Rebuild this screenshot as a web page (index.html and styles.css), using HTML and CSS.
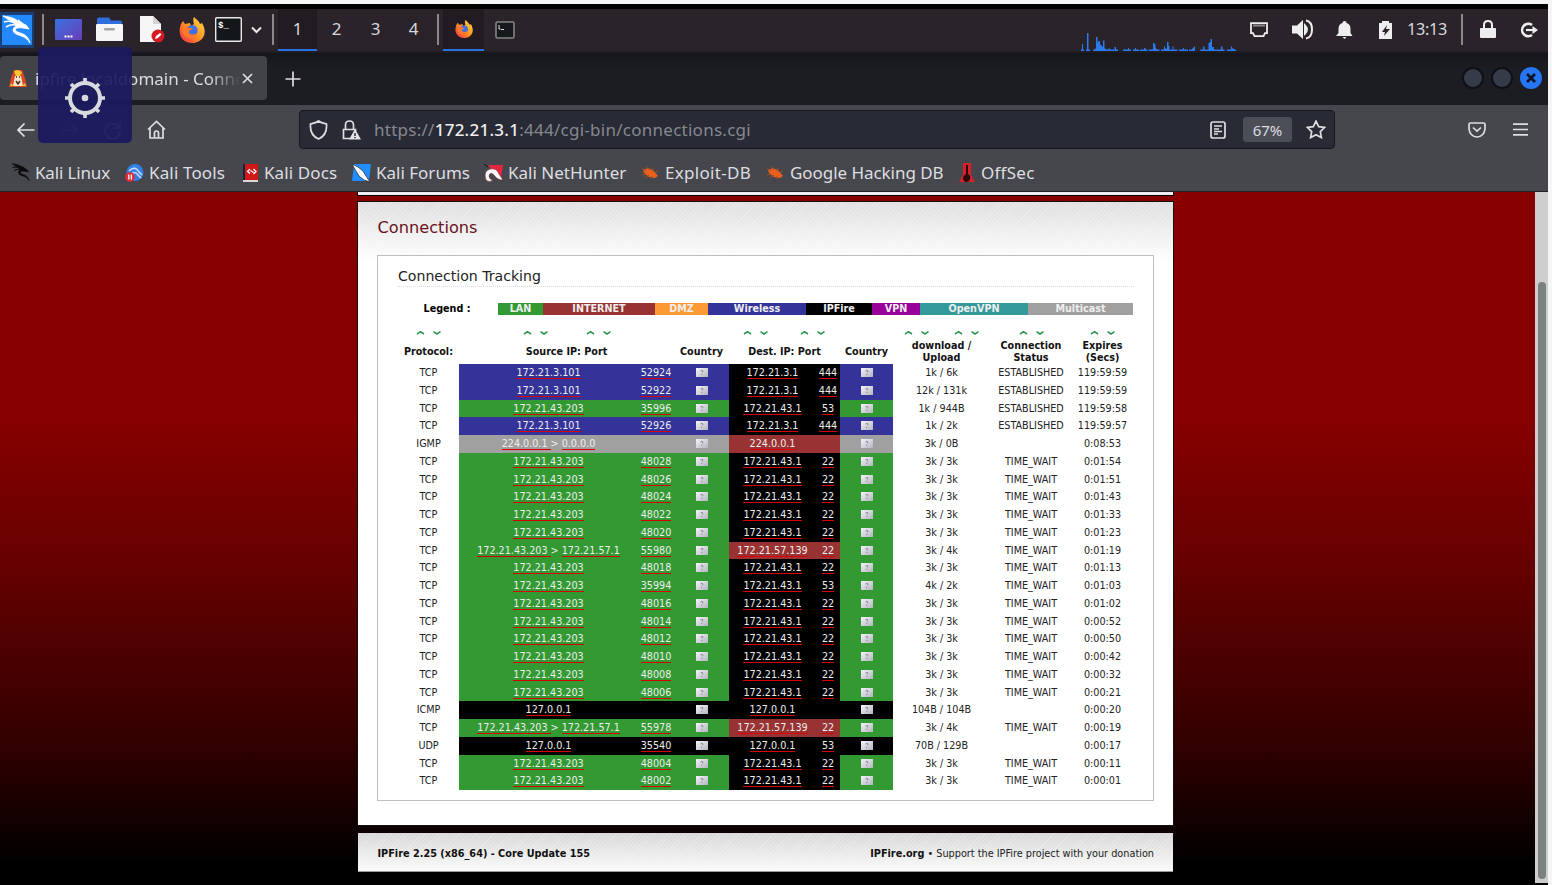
FILE: index.html
```html
<!DOCTYPE html>
<html lang="en">
<head>
<meta charset="utf-8">
<title>ipfire.localdomain - Connections</title>
<link rel="stylesheet" href="styles.css">
</head>
<body>
<svg class="defs" width="0" height="0">
  <defs>
    <linearGradient id="gBlue" x1="0" y1="0" x2="1" y2="1"><stop offset="0" stop-color="#3a70e0"/><stop offset="1" stop-color="#6a3fb8"/></linearGradient>
    <linearGradient id="gFox" x1="1" y1="0" x2="0" y2="1"><stop offset="0" stop-color="#ffe14a"/><stop offset=".5" stop-color="#ff9422"/><stop offset="1" stop-color="#f5264e"/></linearGradient>
    <linearGradient id="gFlag" x1="0" y1="0" x2="1" y2="1"><stop offset="0" stop-color="#f4f4fa"/><stop offset="1" stop-color="#b4b4c0"/></linearGradient>
    <symbol id="dragon" viewBox="0 0 30 30">
      <path d="M1 1 C8 2 13 3 17 7 L24 10 L27 14 L21 13 C15 12 12 14 14 16 C17 19 25 17 28 28 C24 21 18 21 14 19 C10 17 10 12 15 11 C11 6 6 5 1 1Z" fill="currentColor" stroke="currentColor" stroke-width=".9"/>
      <path d="M2 7 C8 5 12 7 15 10 M4 12 C9 9 12 9 15 11 M16 5 L21 9" fill="none" stroke="currentColor" stroke-width="1.6"/>
    </symbol>
    <symbol id="firefox" viewBox="0 0 26 26">
      <path d="M15 0 C18 3 20 4 21 7 L23 6 C30 18 22 26 13 26 C3 26 -2 17 2 7 L4 4 L6 7 L11 6 L12 9 L15 7 C14 4 14 2 15 0Z" fill="url(#gFox)"/>
      <circle cx="13" cy="13.500" r="5.600" fill="#3d6fe8"/>
      <path d="M3 11 C7 8 9 12 14 11 C12 14 9 13 10 16 C12 18 15 18 18 16 C17 22 7 23 4 16Z" fill="#ff7a28"/>
    </symbol>
    <symbol id="bug" viewBox="0 0 18 16">
      <path d="M2 5 L7 3 L13 6 L17 11 L14 13 L8 12 L3 8Z" fill="#e8601c"/>
      <path d="M1 3 L5 6 M5 1 L8 5 M11 3 L13 7 M15 6 L17 7 M1 10 L5 9 M4 13 L8 10 M10 14 L11 11" stroke="#a54b22" stroke-width="1"/>
    </symbol>
  </defs>
</svg>

<div class="desktop">
  <header class="panel">
    <div class="slot w36"><svg class="kali" width="34" height="36" viewBox="0 0 34 36"><rect width="34" height="36" fill="#164a94" opacity=".7"/><rect x="2" y="3" width="30" height="30" fill="#2389ff"/><use href="#dragon" x="2" y="3" width="30" height="30" color="#fff"/></svg></div>
    <div class="slot w13"><i class="sep"></i></div>
    <div class="slot w39"><svg width="27" height="21"><rect width="27" height="21" rx="1" fill="url(#gBlue)"/><path d="M9.500 17.500h8" stroke="#fff" stroke-width="1.800" stroke-dasharray="2 1"/></svg></div>
    <div class="slot w43"><svg width="27" height="25"><path d="M1 9V2q0-1.500 2-1.500h10l2 3h9q2 0 2 2V9z" fill="#2f6fdc"/><rect y="7" width="27" height="17" rx="1" fill="#f6f6f6"/><rect x="8" y="11" width="11" height="2.600" rx="1.300" fill="#a5a5a5"/></svg></div>
    <div class="slot w42"><svg width="26" height="27"><path d="M1 0h13l8 8v18H1z" fill="#f5f5f5"/><path d="M14 0v8h8z" fill="#d5d5d5"/><circle cx="19" cy="20" r="6.500" fill="#d31922"/><path d="M16 23l1-3 4-3 1.500 1.500-3.500 3.500z" fill="#fff"/></svg></div>
    <div class="slot w38"><svg width="26" height="26"><use href="#firefox"/></svg></div>
    <div class="slot w35"><svg width="27" height="25"><rect x=".7" y=".7" width="25.600" height="23.600" rx="1" fill="#14171a" stroke="#e9e9e9" stroke-width="1.400"/><text x="3" y="11" class="term">$_</text></svg></div>
    <div class="slot w21"><svg width="11" height="8"><path d="M1 1.500l4.500 4.500L10 1.500" class="ln2"/></svg></div>
    <div class="slot w11"><i class="sep"></i></div>
    <div class="slot ws on">1</div><div class="slot ws">2</div><div class="slot ws">3</div><div class="slot ws w37">4</div>
    <div class="slot w11"><i class="sep"></i></div>
    <div class="slot w41 on"><svg width="18" height="18" viewBox="0 0 26 26"><use href="#firefox"/></svg></div>
    <div class="slot w41"><svg width="20" height="18"><rect x="1" y="1" width="18" height="16" rx="1.500" fill="#15191b" stroke="#858585" stroke-width="1.600"/><path d="M4 4v4h1.500M6 8.500h3" stroke="#ddd" fill="none"/></svg></div>
    <svg class="cpu" width="156" height="18"><path fill="#2a7bf0" d="M0 18v-1.500h1V11h1v5.500h1V18zM5 18v-1.500h1V0h1.500v16.500H9V18zM12 18v-1.500h2l1-2V4h1.500v6l1-2h1.500v3l1 1 1 1 1 1V7.500h1.500V15l2 1.500h2V15h1v1.500h5V14h1.500v2.500h2V18zM42 16.500h5V15h1v1.500h2V18h-8zM52 16.500h2V15h1v1.500h3V18h-6zM59 16.500h4V15h1.500v1.500h2V18h-8zM68 16.500h4V10h1.500v1l1 1v3l2 1.500h2V18h-11zM80 18v-1.500h3v-3h1v2h2V9h1.500v4h1v3.500h3v-3h1v3h4V18zM98 16.500h4V15h1v1.500h4V18h-9zM108 16.500h3l1-2h1v-1h1V18h-6zM119 16.500h3v-3h1.500v3h4V10h1V9h1V6h1.500v8h2v2.500h7v-3h1.500v3h2V18h-24zM146 16.500h4v-3h1v2h2v1h2V18h-9z"/></svg>
    <div class="slot w44"><svg width="18" height="16"><path d="M1 1.200h16v10h-2l-1.500 3h-9L3 11.200H1z" fill="none" stroke="#eee" stroke-width="1.800"/><path d="M3.500 3.500h11" stroke="#eee" stroke-width="2" stroke-dasharray="1 1"/></svg></div>
    <div class="slot w44"><svg width="22" height="21"><path d="M0 6.500h5L11 1v19l-6-5.500H0z" fill="#eee"/><path d="M13 6.500q4 4 0 8zM14 1.500q6 1 6 9t-6 9" fill="none" stroke="#eee" stroke-width="2"/></svg></div>
    <div class="slot w39"><svg width="17" height="18"><path d="M8.500 0q2 0 2 2 4 1 4 6v4l2 3H0l2.500-3V8q0-5 4-6 0-2 2-2zM6.500 16h4l-2 2z" fill="#eee"/></svg></div>
    <div class="slot w43"><svg width="13" height="18"><path d="M0 2h3V0h7v2h3v16H0z" fill="#eee"/><path d="M8 4L3 11h3l-1 4 6-7H7z" fill="#2b232a"/></svg></div>
    <div class="slot w40 clock">13:13</div>
    <div class="slot w30"><i class="sep"></i></div>
    <div class="slot w21"><svg width="16" height="19"><path d="M4 9V5q0-4 4-4t4 4v4" fill="none" stroke="#eee" stroke-width="2"/><rect y="8" width="16" height="10" rx="1" fill="#eee"/></svg></div>
    <div class="slot w38 out"><svg width="18" height="16"><path d="M12 3A6.200 6.200 0 1 0 12 13" fill="none" stroke="#eee" stroke-width="2.600"/><path d="M6 8h7" stroke="#eee" stroke-width="2.200"/><path d="M12.500 4l5.500 4-5.500 4z" fill="#eee"/></svg></div>
  </header>

  <div class="tabs">
    <div class="tab">
      <svg class="fav" width="18" height="19"><path d="M5 1h8l3 8 2 9H0l2-9z" fill="#dc4a24"/><path d="M5 2l4-1 4 2-2 4H7z" fill="#ffc72f"/><path d="M6 7h6l2 10H4z" fill="#f6e7cc"/><path d="M7 8h1M10 8h1M7 12l2 3 2-3" stroke="#4b2415" stroke-width="1.500" fill="none"/><path d="M2 14l3 3H1zM16 14l-3 3h4z" fill="#ffb72b"/></svg>
      <span class="tabname">ipfire.localdomain - Conne</span>
      <svg width="11" height="11"><path d="M1 1l9 9M10 1l-9 9" class="ln"/></svg>
    </div>
    <svg class="plus" width="16" height="16"><path d="M8 .5v15M.5 8h15" class="ln"/></svg>
    <div class="wins"><i class="win"></i><i class="win"></i><i class="win close"><svg width="10" height="10"><path d="M1 1l8 8M9 1L1 9" stroke="#0b1224" stroke-width="2.600"/></svg></i></div>
  </div>

  <div class="toolbar">
    <svg class="back" width="18" height="14"><path d="M17.500 7H1M7.500 .5L1 7l6.500 6.500" class="ln"/></svg>
    <svg class="fwd" width="18" height="14"><path d="M.5 7H17M10.500 .5L17 7l-6.500 6.500" class="ln"/></svg>
    <svg class="reload" width="19" height="19"><path d="M16 6.500A7.500 7.500 0 1 0 17 10M17 1v6h-6" class="ln"/></svg>
    <svg class="home" width="19" height="20"><path d="M1 9.500L9.500 1.500 18 9.500M3 8v10h13V8M7.500 18v-5q0-2 2-2t2 2v5" class="ln"/></svg>
    <div class="url">
      <svg width="19" height="20"><path d="M9.500 1C7 3 4 3.500 1.500 4q-1 11 8 15 9-4 8-15C15 3.500 12 3 9.500 1z" class="ln"/></svg>
      <svg class="lock" width="19" height="20"><path d="M8 18.500H1.500V9.500h12v2M3.500 9.500V5q0-4 4-4t4 4v4.500" class="ln"/><path d="M13 9l6 10.500H7z" fill="#e4e4e6"/><path d="M13 13v3M13 17v1.200" stroke="#282a35" stroke-width="1.500"/></svg>
      <span class="address">https://<b>172.21.3.1</b>:444/cgi-bin/connections.cgi</span>
      <svg class="reader" width="16" height="18"><rect x="1" y="1" width="14" height="16" rx="2" class="ln"/><path d="M4 5h8M4 8h5M4 10.500h8M4 13h4" stroke="#dedee0" stroke-width="1.300"/></svg>
      <span class="zoom">67%</span>
      <svg class="star" width="20" height="19"><path d="M10 1.200l2.700 5.400 6 .8-4.400 4.200 1.100 6L10 14.700l-5.400 2.900 1.100-6L1.300 7.400l6-.8z" class="ln"/></svg>
    </div>
    <svg class="pocket" width="18" height="16"><path d="M2.500 1h13q1.500 0 1.500 1.500V7q-1 7.500-8 8Q2 14.500 1 7V2.500Q1 1 2.500 1zM5 5.500l4 3.700 4-3.700" class="ln"/></svg>
    <svg class="menu" width="15" height="13"><path d="M0 1.200h15M0 6.500h15M0 11.800h15" class="ln"/></svg>
  </div>

  <nav class="marks">
    <a class="mark m1"><svg width="20" height="19" viewBox="0 0 30 30"><use href="#dragon" color="#0b0b0c"/></svg><span>Kali Linux</span></a>
    <a class="mark m2"><svg width="20" height="19"><circle cx="10" cy="9.500" r="8.500" fill="#357fe8"/><path d="M4 8q6-6 10 1l3 3M5 12q5-5 8 0l3 3" stroke="#c6e0ff" fill="none" stroke-width="1.500"/><circle cx="5" cy="14" r="4.800" fill="#e52939"/><path d="M3.800 11.500v5M6.400 11.500v5" stroke="#fff" stroke-width="1.300"/></svg><span>Kali Tools</span></a>
    <a class="mark m3"><svg width="17" height="20"><path d="M0 1h3v16H0z" fill="#13223e"/><path d="M2 1h13v16H2z" fill="#d01818"/><path d="M0 18h15" stroke="#ded5d5" stroke-width="2"/><path d="M7 6L4.500 8.500 7 10.500M10.500 6L13 8.500 10.500 11M7.500 7.500l3 2" stroke="#fff" fill="none" stroke-width="1.300"/></svg><span>Kali Docs</span></a>
    <a class="mark m4"><svg width="20" height="19"><path d="M3 1h17l-2 17H1z" fill="#218dff"/><path d="M1 1l6 3 5 4 3 5 4 6-6-2-5-4-3-5z" fill="#fff" stroke="#222" stroke-width=".7"/></svg><span>Kali Forums</span></a>
    <a class="mark m5"><svg width="20" height="19"><path d="M4 2h15l-2 13-6-5z" fill="#e4253e"/><path d="M2 17q-3-9 4-11 7-1 9 5l4 6q-6 0-9-5-4-4-5 1 0 3 4 4-4 3-7 0z" fill="#fff" stroke="#711" stroke-width=".5"/><path d="M0 1l4 3" stroke="#111"/></svg><span>Kali NetHunter</span></a>
    <a class="mark m6"><svg width="18" height="16"><use href="#bug"/></svg><span>Exploit-DB</span></a>
    <a class="mark m7"><svg width="18" height="16"><use href="#bug"/></svg><span>Google Hacking DB</span></a>
    <a class="mark m8"><svg width="16" height="20"><path d="M4 0h8v12l4 7H0l4-7z" fill="#d91f28"/><path d="M7 2h2v9q3 2 2 5t-4 3q-3-1-3-4 0-2 3-4z" fill="#2a0809"/></svg><span>OffSec</span></a>
  </nav>

  <main class="view">
    <div class="page">
      <div class="strip"></div>
      <section class="card">
        <h1>Connections</h1>
        <div class="box">
          <h2><span>Connection Tracking</span></h2>
          <div class="legend">
            <span class="lbl">Legend :</span><span class="lan">LAN</span><span class="inet">INTERNET</span><span class="dmz">DMZ</span><span class="wifi">Wireless</span><span class="fire">IPFire</span><span class="vpn">VPN</span><span class="ovpn">OpenVPN</span><span class="multi">Multicast</span>
          </div>
          <svg class="sorts" width="735" height="6" id="sorts"></svg>
          <div class="row head">
            <b>Protocol:</b><b class="span2">Source IP: Port</b><b>Country</b><b class="span2">Dest. IP: Port</b><b>Country</b><b>download /<br>Upload</b><b>Connection<br>Status</b><b>Expires<br>(Secs)</b>
          </div>
          <div id="rows"></div>
        </div>
      </section>
      <footer class="foot"><b>IPFire 2.25 (x86_64) - Core Update 155</b><span><b>IPFire.org</b> • Support the IPFire project with your donation</span></footer>
    </div>
    <div class="scroll"><i></i></div>
  </main>

  <div class="badge"><svg width="42" height="42" viewBox="-21 -21 42 42"><circle r="15" fill="none" stroke="#d9dadd" stroke-width="4"/><circle r="3.300" fill="#d9dadd"/><path d="M0-20v5M0 20v-5M-20 0h5M20 0h-5M-14-14l4 4M14 14l-4-4M-14 14l4-4M14-14l-4 4" stroke="#d9dadd" stroke-width="3.600"/></svg></div>
</div>
<script src="app.js"></script>
</body>
</html>
```
FILE: styles.css
```css
* { box-sizing: border-box; }
body { margin: 0; width: 1552px; height: 885px; overflow: hidden; background: #f5f5f5; font-family: "Noto Sans", sans-serif; }
svg { display: block; flex: none; }
.defs { position: absolute; }
.desktop { position: relative; width: 1548px; height: 885px; border-top: 4px solid #f5f5f5; background: #000; display: flex; flex-direction: column; }
.ln { fill: none; stroke: #dedee0; stroke-width: 1.7; }
.ln2 { fill: none; stroke: #e8e8e8; stroke-width: 2; }

.panel { height: 49px; flex: none; border-top: 5px solid #000; border-bottom: 2px solid #1f1c22; background: #2b232a; display: flex; }
.slot { height: 42px; flex: none; display: flex; align-items: center; justify-content: center; padding-bottom: 1px; color: #d8d8da; font-size: 17px; }
.w11 { width: 11px; } .w13 { width: 13px; } .w21 { width: 21px; } .w30 { width: 30px; } .w35 { width: 35px; }
.w36 { width: 36px; justify-content: flex-start; } .w38 { width: 38px; } .w39, .ws { width: 39px; } .w40 { width: 40px; }
.w41 { width: 41px; } .w42 { width: 42px; } .w43 { width: 43px; } .w44 { width: 44px; } .ws.w37 { width: 37px; }
.on { background: #221b21; border-bottom: 2px solid #2a72e5; padding-bottom: 0; }
.ws { padding-bottom: 3px; }
.ws.on { padding-bottom: 1px; }
.sep { width: 2px; height: 31px; background: #8c878b; }
.term { font: bold 9px "Liberation Mono", monospace; fill: #fff; }
.cpu { margin: 24px 0 0 556px; }
.clock { font-size: 16.3px; letter-spacing: -.35px; padding-bottom: 2px; }
.out { margin-left: 12px; }

.tabs { height: 52px; flex: none; background: linear-gradient(#15161a, #1c1d22 30%); display: flex; align-items: flex-start; }
.tab { width: 267px; height: 44px; margin-top: 3px; padding: 0 14px 0 9px; border-radius: 4px; background: #414349; display: flex; align-items: center; }
.tabname { width: 207px; margin: 0 0 0 8px; white-space: nowrap; font-size: 17px; color: #dcdcde; -webkit-mask-image: linear-gradient(90deg, #000 84%, transparent 99%); mask-image: linear-gradient(90deg, #000 84%, transparent 99%); }
.plus { margin: 18px 0 0 18px; }
.wins { margin: 14px 6px 0 auto; display: flex; gap: 7px; }
.win { width: 22px; height: 22px; border-radius: 50%; background: #363b49; border: 2px solid #101116; display: flex; align-items: center; justify-content: center; }
.close { background: #2676f4; border-color: #2676f4; }

.toolbar { height: 48px; flex: none; background: #45474d; display: flex; align-items: center; padding-left: 17px; }
.toolbar > svg { margin-top: 2px; }
.toolbar .fwd { margin-left: 25px; opacity: .35; }
.toolbar .reload { margin-left: 25px; opacity: .65; }
.toolbar .home { margin-left: 25px; }
.url { width: 1036px; height: 39px; margin: 1px 0 0 133px; padding-left: 9px; background: #282a35; border: 1px solid #17181e; border-radius: 4px; display: flex; align-items: center; }
.lock { margin-left: 14px; }
.address { width: 834px; margin-left: 13px; font-size: 17px; color: #86888f; white-space: nowrap; letter-spacing: .26px; }
.address b { font-weight: 500; color: #ededf0; }
.reader { margin-left: 2px; }
.zoom { width: 49px; height: 25px; margin: 0 14px 0 17px; border-radius: 3px; background: #4c4e57; color: #dcdce0; font-size: 15px; line-height: 27px; text-align: center; }
.toolbar .pocket { margin-left: 133px; margin-top: 1px; }
.toolbar .menu { margin-left: 27px; margin-top: 0; }

.marks { height: 39px; flex: none; background: #45474d; border-bottom: 1px solid #202126; display: flex; padding-left: 11px; }
.mark { flex: none; height: 39px; display: flex; align-items: center; font-size: 17px; color: #dedee0; white-space: nowrap; }
.m1 { width: 114px; gap: 4px; letter-spacing: -.15px; } .m2 { width: 118px; gap: 4px; letter-spacing: .15px; } .m3 { width: 108px; gap: 4px; letter-spacing: .1px; } .m4 { width: 133px; gap: 5px; }
.m5 { width: 157px; gap: 4px; } .m6 { width: 125px; gap: 6px; letter-spacing: .3px; } .m7 { width: 193px; gap: 6px; letter-spacing: -.05px; } .m8 { gap: 6px; letter-spacing: .25px; }

.view { height: 691px; flex: none; display: flex; justify-content: space-between; background: linear-gradient(#860000 0, #860000 230px, #640000 380px, #320000 550px, #000 672px); font-family: "DejaVu Sans Condensed", "DejaVu Sans", sans-serif; font-stretch: condensed; }
.page { width: 817px; margin-left: 357px; display: flex; flex-direction: column; }
.strip { height: 4px; background: #eee; border: 1px solid #000; border-top: 0; }
.card { height: 625px; margin-top: 5px; border: 1px solid #111; padding: 0 20px; background: repeating-linear-gradient(135deg, rgba(255,255,255,.22) 0 1px, rgba(255,255,255,0) 1px 3px), linear-gradient(#dfdfdf, #fff 60px); }
h1 { margin: 15px 0 16px -.5px; font-family: "DejaVu Sans", sans-serif; font-stretch: normal; font-size: 16.2px; line-height: 22px; font-weight: 400; color: #6a1222; }
.box { width: 777px; height: 546px; margin-left: -1px; border: 1px solid #bfbfbf; background: #fff; padding: 0 19px 0 20px; }
h2 { margin: 7px 0 16px; height: 24px; border-bottom: 1px dotted #ddd; font-family: "DejaVu Sans", sans-serif; font-stretch: normal; font-size: 14.1px; line-height: 27px; font-weight: 400; color: #222; }
.legend { display: flex; height: 12px; width: 735px; font-size: 10.7px; line-height: 12px; font-weight: 700; color: #eee; text-align: center; }
.lbl { width: 100px; padding-right: 2px; color: #000; }
.lan { background: #393; width: 45px; } .inet { background: #933; width: 112px; } .dmz { background: #f93; width: 53px; } .wifi { background: #339; width: 98px; }
.fire { background: #000; width: 66px; } .vpn { background: #909; width: 48px; } .ovpn { background: #399; width: 108px; } .multi { background: #a0a0a0; width: 105px; }
.sorts { margin-top: 15px; }
.row { width: 735px; height: 17.75px; display: grid; grid-template-columns: 61px 179px 36px 55px 87px 24px 53px 97px 82px 61px; align-items: stretch; font-size: 10.7px; line-height: 18.75px; text-align: center; color: #222; white-space: nowrap; }
.row span { height: 17.75px; }
.row.head { height: 28px; padding-top: 3px; align-items: center; line-height: 12px; color: #111; }
.span2 { grid-column: span 2; }
.row u { display: inline-block; height: 12px; line-height: 12px; color: #eee; text-decoration: none; border-bottom: 1px solid #d80000; }
.row u:empty { display: none; }
.green { background: #393; } .blue { background: #339; } .black { background: #000; } .red { background: #933; } .grey { background: #a0a0a0; }
.row span[class] { color: #eee; }
.flag { width: 12px; height: 9px; margin: 4px auto 0; }
.foot { height: 39px; margin: 7px 1px 0; padding: 2px 19px 0 19.5px; display: flex; justify-content: space-between; align-items: center; font-size: 10.8px; color: #222; border-bottom: 1px solid #999; background: repeating-linear-gradient(135deg, rgba(255,255,255,.22) 0 1px, rgba(255,255,255,0) 1px 3px), linear-gradient(#d7d7d7, #fafafa); }
.foot b { color: #111; }
.scroll { width: 13px; background: #cdcdcd; padding: 90px 2px 0 3px; }
.scroll i { display: block; width: 8px; height: 597px; border-radius: 4px; background: #7b8080; }

.badge { position: absolute; left: 38px; top: 43px; width: 94px; height: 96px; border-radius: 5px; background: rgba(27, 25, 96, .92); display: flex; align-items: center; justify-content: center; padding-top: 6px; }
```
FILE: app.js
```js
const g = (port, time) => ['TCP', 'green', '172.21.43.203', port, 'black', '172.21.43.1', '22', '3k / 3k', 'TIME_WAIT', time];
const w = (port, rate, time) => ['TCP', 'blue', '172.21.3.101', port, 'black', '172.21.3.1', '444', rate, 'ESTABLISHED', time];
const n = (port, time) => ['TCP', 'green', '172.21.43.203 > 172.21.57.1', port, 'red', '172.21.57.139', '22', '3k / 4k', 'TIME_WAIT', time];
const data = [
  w('52924', '1k / 6k', '119:59:59'), w('52922', '12k / 131k', '119:59:59'),
  ['TCP', 'green', '172.21.43.203', '35996', 'black', '172.21.43.1', '53', '1k / 944B', 'ESTABLISHED', '119:59:58'],
  w('52926', '1k / 2k', '119:59:57'),
  ['IGMP', 'grey', '224.0.0.1 > 0.0.0.0', '', 'red', '224.0.0.1', '', '3k / 0B', '', '0:08:53'],
  g('48028', '0:01:54'), g('48026', '0:01:51'), g('48024', '0:01:43'), g('48022', '0:01:33'), g('48020', '0:01:23'),
  n('55980', '0:01:19'), g('48018', '0:01:13'),
  ['TCP', 'green', '172.21.43.203', '35994', 'black', '172.21.43.1', '53', '4k / 2k', 'TIME_WAIT', '0:01:03'],
  g('48016', '0:01:02'), g('48014', '0:00:52'), g('48012', '0:00:50'), g('48010', '0:00:42'), g('48008', '0:00:32'), g('48006', '0:00:21'),
  ['ICMP', 'black', '127.0.0.1', '', 'black', '127.0.0.1', '', '104B / 104B', '', '0:00:20'],
  n('55978', '0:00:19'),
  ['UDP', 'black', '127.0.0.1', '35540', 'black', '127.0.0.1', '53', '70B / 129B', '', '0:00:17'],
  g('48004', '0:00:11'), g('48002', '0:00:01')
];
const link = t => t.split(' > ').map((s, i, a) => `<u>${s}${i < a.length - 1 ? '&nbsp;' : ''}</u>`).join('&gt; ');
const flag = '<svg class="flag" viewBox="0 0 12 9"><rect width="12" height="9" fill="url(#gFlag)"/><path d="M4.500 3q1.500-1.500 2.500 0 0 1-1.200 1.700M5.800 6v1" fill="none" stroke="#888899"/></svg>';
document.getElementById('rows').innerHTML = data.map(([p, c, src, sp, dc, dst, dp, rate, st, ex]) =>
  `<div class="row"><span>${p}</span><span class="${c}">${link(src)}</span><span class="${c}">${link(sp)}</span><span class="${c}">${flag}</span>` +
  `<span class="${dc}">${link(dst)}</span><span class="${dc}">${link(dp)}</span><span class="${c}">${flag}</span><span>${rate}</span><span>${st}</span><span>${ex}</span></div>`).join('');
document.getElementById('sorts').innerHTML = [22.5, 129.5, 192.5, 349.5, 406.5, 510.500, 560.5, 625.5, 696.5].map(x =>
  `<path d="M${x - 3.5} 4L${x} 1.700L${x + 3.5} 4M${x + 13} 1.700L${x + 16.500} 4L${x + 20} 1.700" fill="none" stroke="#2c9448" stroke-width="1.500"/>`).join('');
```
